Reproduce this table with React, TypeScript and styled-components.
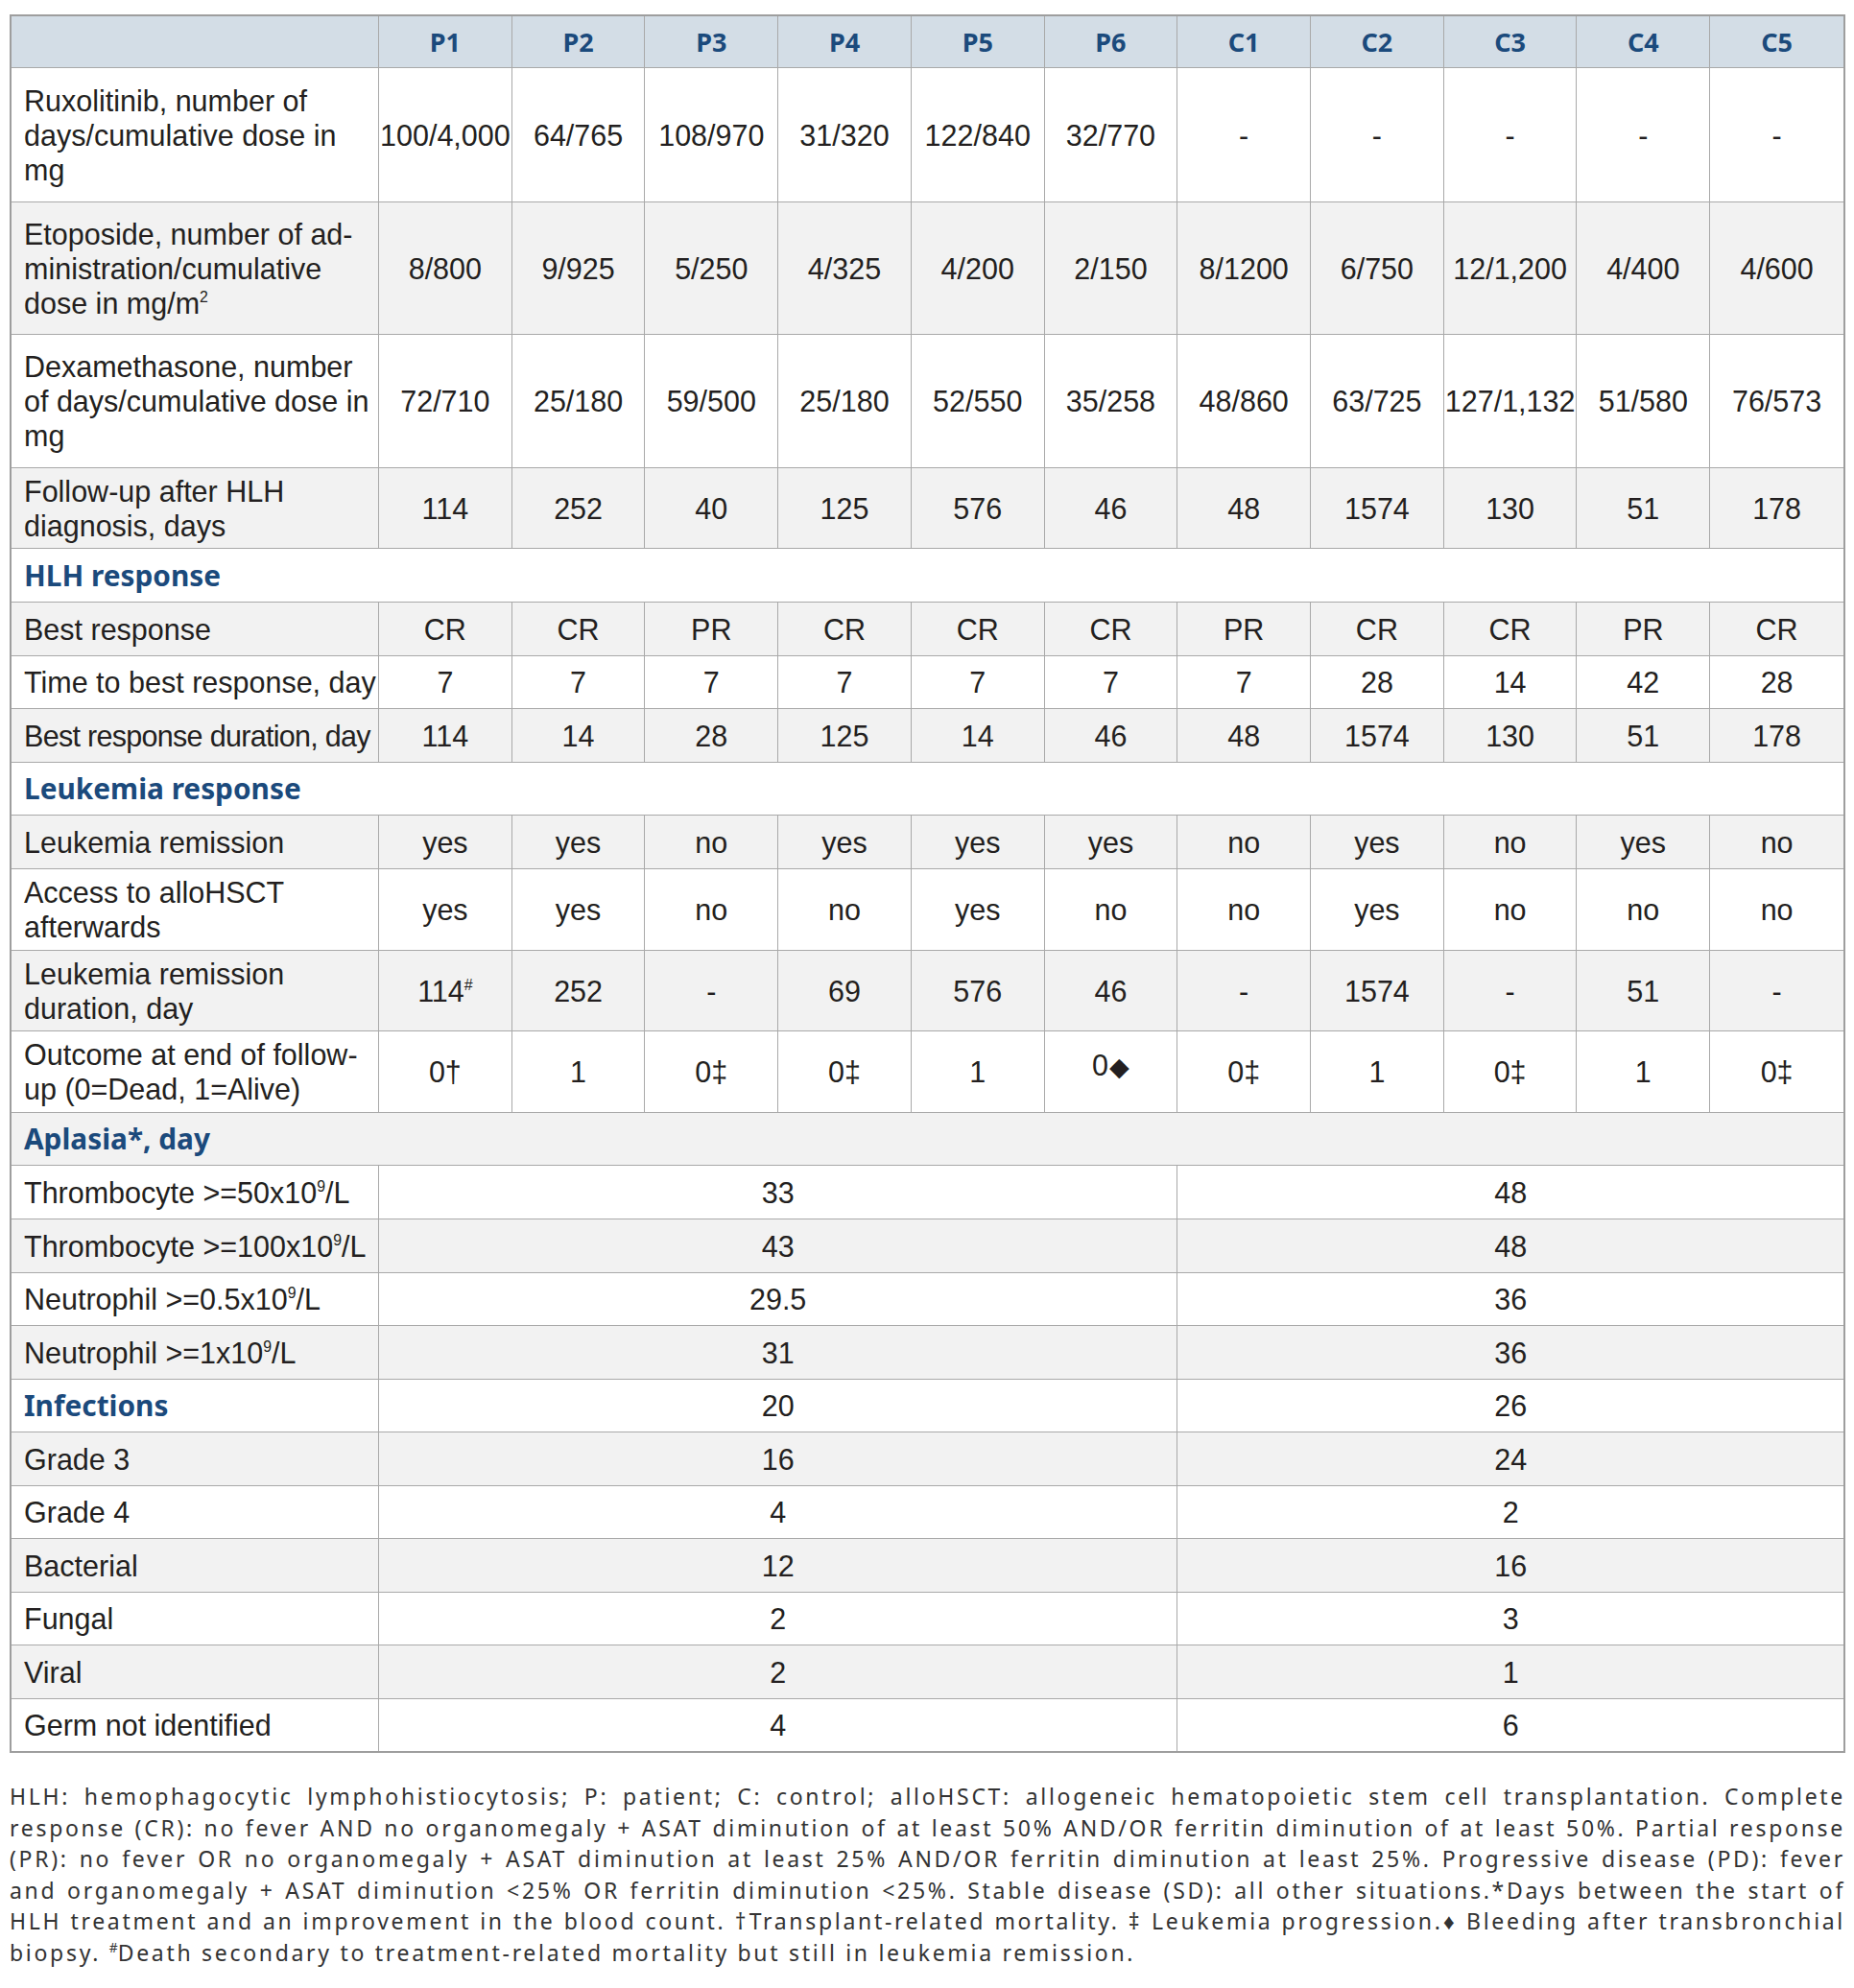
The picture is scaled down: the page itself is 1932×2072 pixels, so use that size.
import React from "react";
import styled, { createGlobalStyle, css } from "styled-components";

const BLUE = "#1b4a7c";
const LINE = "#a9a9a9";

const GlobalStyle = createGlobalStyle`
  body {
    margin: 0;
    background: #fff;
  }
`;

const Page = styled.div`
  padding: 15px 9px 20px 10px;
  color: #231f20;
`;

const Table = styled.table`
  width: 100%;
  table-layout: fixed;
  border-collapse: separate;
  border-spacing: 0;
  border: 2px solid #9e9e9e;
  font-family: "Liberation Sans", Arial, sans-serif;
  font-size: 30.5px;
  line-height: 36px;
`;

const Row = styled.tr<{ $h: number }>`
  height: ${({ $h }) => $h}px;
  background: #fff;

  &:nth-child(even) {
    background: #f2f2f2;
  }
`;

const HeadRow = styled.tr`
  height: 54px;
  background: #d3dde6;
`;

const cellBase = css`
  padding: 0;
  vertical-align: middle;
  border-right: 1px solid ${LINE};
  border-bottom: 1px solid ${LINE};
  white-space: nowrap;

  &:last-child {
    border-right: none;
  }

  tbody tr:last-child > & {
    border-bottom: none;
  }
`;

const heading = css`
  font-family: "Noto Sans", sans-serif;
  font-weight: 700;
  color: ${BLUE};
`;

const HeadCell = styled.th`
  ${cellBase};
  ${heading};
  font-size: 27px;
  text-align: center;
`;

const LabelCell = styled.td<{ $heading?: boolean; $tight?: boolean }>`
  ${cellBase};
  text-align: left;
  padding: 0 4px 0 13px;
  letter-spacing: ${({ $tight }) => ($tight ? "-0.7px" : "normal")};
  ${({ $heading }) =>
    $heading &&
    css`
      ${heading};
      font-size: 29.8px;
    `};
`;

const ValueCell = styled.td<{ $lift?: boolean }>`
  ${cellBase};
  text-align: center;
  padding-bottom: ${({ $lift }) => ($lift ? "14px" : "0")};
`;

const Sup = styled.sup`
  font-size: 0.52em;
  line-height: 0;
  vertical-align: 0.75em;
`;

const Diamond = styled.span`
  font-family: "DejaVu Sans", sans-serif;
  font-size: 27px;
  line-height: 0;
  margin-left: 1px;
`;

const Notes = styled.div`
  margin-top: 29px;
  font-family: "Noto Sans", sans-serif;
  font-size: 23px;
  letter-spacing: 2.7px;
  line-height: 32.5px;
  color: #333;
`;

const NoteLine = styled.div<{ $last?: boolean }>`
  text-align: justify;
  text-align-last: ${({ $last }) => ($last ? "left" : "justify")};
`;

const NoteSup = styled.sup`
  font-size: 0.6em;
  line-height: 0;
  letter-spacing: 0;
`;

const COLS = ["P1", "P2", "P3", "P4", "P5", "P6", "C1", "C2", "C3", "C4", "C5"];

type DataRow = { kind: "data"; h: number; label: React.ReactNode[]; tight?: boolean; values: React.ReactNode[] };
type SectionRow = { kind: "section"; h: number; label: string };
type SplitRow = { kind: "split"; h: number; label: React.ReactNode; heading?: boolean; p: string; c: string };
type AnyRow = DataRow | SectionRow | SplitRow;

const split = (s: string) => s.split(" ");
const x109 = (pre: string) => (
  <>
    {pre}
    <Sup>9</Sup>/L
  </>
);

const ROWS: AnyRow[] = [
  {
    kind: "data",
    h: 140,
    label: ["Ruxolitinib, number of", "days/cumulative dose in", "mg"],
    values: ["100/4,000", "64/765", "108/970", "31/320", "122/840", "32/770", "-", "-", "-", "-", "-"],
  },
  {
    kind: "data",
    h: 138,
    label: [
      "Etoposide, number of ad-",
      "ministration/cumulative",
      <>
        dose in mg/m<Sup>2</Sup>
      </>,
    ],
    values: ["8/800", "9/925", "5/250", "4/325", "4/200", "2/150", "8/1200", "6/750", "12/1,200", "4/400", "4/600"],
  },
  {
    kind: "data",
    h: 139,
    label: ["Dexamethasone, number", "of days/cumulative dose in", "mg"],
    values: ["72/710", "25/180", "59/500", "25/180", "52/550", "35/258", "48/860", "63/725", "127/1,132", "51/580", "76/573"],
  },
  {
    kind: "data",
    h: 84,
    label: ["Follow-up after HLH", "diagnosis, days"],
    values: split("114 252 40 125 576 46 48 1574 130 51 178"),
  },
  { kind: "section", h: 56, label: "HLH response" },
  { kind: "data", h: 56, label: ["Best response"], values: split("CR CR PR CR CR CR PR CR CR PR CR") },
  { kind: "data", h: 55, label: ["Time to best response, day"], values: split("7 7 7 7 7 7 7 28 14 42 28") },
  {
    kind: "data",
    h: 56,
    label: ["Best response duration, day"],
    tight: true,
    values: split("114 14 28 125 14 46 48 1574 130 51 178"),
  },
  { kind: "section", h: 55, label: "Leukemia response" },
  { kind: "data", h: 56, label: ["Leukemia remission"], values: split("yes yes no yes yes yes no yes no yes no") },
  { kind: "data", h: 85, label: ["Access to alloHSCT", "afterwards"], values: split("yes yes no no yes no no yes no no no") },
  {
    kind: "data",
    h: 84,
    label: ["Leukemia remission", "duration, day"],
    values: [
      <>
        114<Sup>#</Sup>
      </>,
      "252",
      "-",
      "69",
      "576",
      "46",
      "-",
      "1574",
      "-",
      "51",
      "-",
    ],
  },
  {
    kind: "data",
    h: 85,
    label: ["Outcome at end of follow-", "up (0=Dead, 1=Alive)"],
    values: ["0†", "1", "0‡", "0‡", "1", "diamond", "0‡", "1", "0‡", "1", "0‡"],
  },
  { kind: "section", h: 55, label: "Aplasia*, day" },
  { kind: "split", h: 56, label: x109("Thrombocyte >=50x10"), p: "33", c: "48" },
  { kind: "split", h: 56, label: x109("Thrombocyte >=100x10"), p: "43", c: "48" },
  { kind: "split", h: 55, label: x109("Neutrophil >=0.5x10"), p: "29.5", c: "36" },
  { kind: "split", h: 56, label: x109("Neutrophil >=1x10"), p: "31", c: "36" },
  { kind: "split", h: 55, label: "Infections", heading: true, p: "20", c: "26" },
  { kind: "split", h: 56, label: "Grade 3", p: "16", c: "24" },
  { kind: "split", h: 55, label: "Grade 4", p: "4", c: "2" },
  { kind: "split", h: 56, label: "Bacterial", p: "12", c: "16" },
  { kind: "split", h: 55, label: "Fungal", p: "2", c: "3" },
  { kind: "split", h: 56, label: "Viral", p: "2", c: "1" },
  { kind: "split", h: 54, label: "Germ not identified", p: "4", c: "6" },
];

const renderValue = (v: React.ReactNode, i: number) => {
  if (v === "diamond") {
    return (
      <ValueCell key={i} $lift>
        0<Diamond>◆</Diamond>
      </ValueCell>
    );
  }
  return <ValueCell key={i}>{v}</ValueCell>;
};

const renderRow = (row: AnyRow, i: number) => {
  if (row.kind === "section") {
    return (
      <Row key={i} $h={row.h}>
        <LabelCell $heading colSpan={12}>
          {row.label}
        </LabelCell>
      </Row>
    );
  }
  if (row.kind === "split") {
    return (
      <Row key={i} $h={row.h}>
        <LabelCell $heading={row.heading}>{row.label}</LabelCell>
        <ValueCell colSpan={6}>{row.p}</ValueCell>
        <ValueCell colSpan={5}>{row.c}</ValueCell>
      </Row>
    );
  }
  return (
    <Row key={i} $h={row.h}>
      <LabelCell $tight={row.tight}>
        {row.label.map((line, j) => (
          <React.Fragment key={j}>
            {j > 0 && <br />}
            {line}
          </React.Fragment>
        ))}
      </LabelCell>
      {row.values.map(renderValue)}
    </Row>
  );
};

const NOTES: React.ReactNode[] = [
  "HLH: hemophagocytic lymphohistiocytosis; P: patient; C: control; alloHSCT: allogeneic hematopoietic stem cell transplantation. Complete",
  "response (CR): no fever AND no organomegaly + ASAT diminution of at least 50% AND/OR ferritin diminution of at least 50%. Partial response",
  "(PR): no fever OR no organomegaly + ASAT diminution at least 25% AND/OR ferritin diminution at least 25%. Progressive disease (PD): fever",
  "and organomegaly + ASAT diminution <25% OR ferritin diminution <25%. Stable disease (SD): all other situations.*Days between the start of",
  "HLH treatment and an improvement in the blood count. †Transplant-related mortality. ‡ Leukemia progression.♦ Bleeding after transbronchial",
  <>
    biopsy. <NoteSup>#</NoteSup>Death secondary to treatment-related mortality but still in leukemia remission.
  </>,
];

export default function App() {
  return (
    <Page>
      <GlobalStyle />
      <Table>
        <colgroup>
          <col style={{ width: 383 }} />
          {COLS.map((c) => (
            <col key={c} />
          ))}
        </colgroup>
        <thead>
          <HeadRow>
            <HeadCell />
            {COLS.map((c) => (
              <HeadCell key={c}>{c}</HeadCell>
            ))}
          </HeadRow>
        </thead>
        <tbody>{ROWS.map(renderRow)}</tbody>
      </Table>
      <Notes>
        {NOTES.map((n, i) => (
          <NoteLine key={i} $last={i === NOTES.length - 1}>
            {n}
          </NoteLine>
        ))}
      </Notes>
    </Page>
  );
}
